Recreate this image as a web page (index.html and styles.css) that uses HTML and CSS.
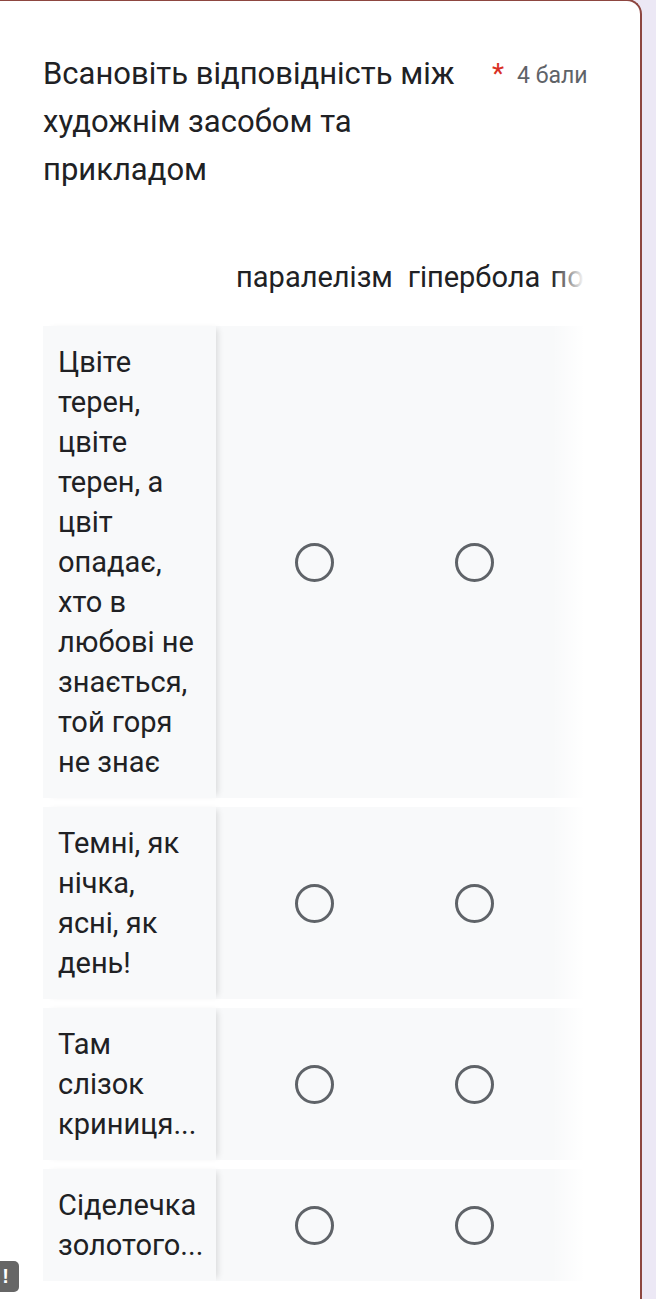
FILE: index.html
```html
<!DOCTYPE html>
<html lang="uk">
<head>
<meta charset="utf-8">
<title>Форма</title>
<link rel="stylesheet" href="styles.css">
</head>
<body>
<div class="card">
  <div class="title-row">
    <div class="title">Всановіть відповідність між художнім засобом та прикладом</div>
    <div class="meta"><span class="req">*</span><span class="points">4 бали</span></div>
  </div>
  <div class="matrix">
    <div class="scroller">
      <div class="head">
        <div class="spacer"></div>
        <div class="col">паралелізм</div>
        <div class="col">гіпербола</div>
        <div class="col">порівняння</div>
      </div>
      <div class="row">
        <div class="label">Цвіте терен, цвіте терен, а цвіт опадає, хто в любові не знається, той горя не знає</div>
        <div class="cell"><span class="radio"></span></div>
        <div class="cell"><span class="radio"></span></div>
        <div class="cell"><span class="radio"></span></div>
      </div>
      <div class="row">
        <div class="label">Темні, як нічка, ясні, як день!</div>
        <div class="cell"><span class="radio"></span></div>
        <div class="cell"><span class="radio"></span></div>
        <div class="cell"><span class="radio"></span></div>
      </div>
      <div class="row">
        <div class="label">Там слізок криниця...</div>
        <div class="cell"><span class="radio"></span></div>
        <div class="cell"><span class="radio"></span></div>
        <div class="cell"><span class="radio"></span></div>
      </div>
      <div class="row">
        <div class="label">Сіделечка золотого...</div>
        <div class="cell"><span class="radio"></span></div>
        <div class="cell"><span class="radio"></span></div>
        <div class="cell"><span class="radio"></span></div>
      </div>
    </div>
    <div class="fade"></div>
  </div>
</div>
<div class="badge">!</div>
</body>
</html>
```

FILE: styles.css
```css
html, body {
  margin: 0;
  padding: 0;
}
body {
  background: #ece8f5;
  font-family: Roboto, "Noto Sans", "Liberation Sans", sans-serif;
  color: #202124;
  overflow: hidden;
  height: 1299px;
}
.card {
  box-sizing: border-box;
  width: 642px;
  min-height: 1340px;
  margin-top: -1px;
  background: #fff;
  border: 2px solid #8d4640;
  border-left: none;
  border-bottom: none;
  border-radius: 0 15px 0 0;
  padding: 49px 51px 80px 43px;
}
.title-row {
  display: flex;
  align-items: flex-start;
}
.title {
  flex: 0 0 436px;
  font-size: 31px;
  line-height: 48px;
  color: #202124;
}
.meta {
  display: flex;
  align-items: baseline;
  margin-left: 13px;
  padding-top: 8px;
  white-space: nowrap;
}
.req {
  color: #d93025;
  font-size: 28px;
  line-height: 32px;
  margin-right: 13px;
}
.points {
  color: #5f6368;
  font-size: 23px;
  line-height: 32px;
}
.matrix {
  position: relative;
  margin-top: 63px;
  width: 545px;
}
.scroller {
  overflow: hidden;
  display: flex;
  flex-direction: column;
  gap: 9px;
}
.head, .row {
  display: grid;
  grid-template-columns: 186px 171px 148px 160px;
  width: 665px;
}
.head {
  font-size: 29px;
  line-height: 40px;
  padding-bottom: 20px;
}
.col {
  text-align: center;
  white-space: nowrap;
}
.row {
  background: #f8f9fa;
}
.label {
  box-sizing: border-box;
  width: 173px;
  padding: 16px 16px 16px 15px;
  font-size: 29px;
  line-height: 40px;
  background: #f8f9fa;
  box-shadow: 5px 0 6px -3px rgba(0, 0, 0, 0.12);
  position: relative;
}
.cell {
  display: flex;
  align-items: center;
  justify-content: center;
}
.radio {
  box-sizing: border-box;
  width: 39px;
  height: 39px;
  border: 3px solid #5f6368;
  border-radius: 50%;
}
.fade {
  position: absolute;
  top: 0;
  right: 0;
  bottom: 0;
  width: 36px;
  background: linear-gradient(to right, rgba(255, 255, 255, 0), #fff 90%);
}
.badge {
  position: absolute;
  left: -8px;
  top: 1261px;
  width: 27px;
  height: 31px;
  border-radius: 5px;
  background: #666;
  color: #fff;
  font-family: "Liberation Sans", sans-serif;
  font-weight: bold;
  font-size: 20px;
  line-height: 31px;
  text-align: center;
}
```
